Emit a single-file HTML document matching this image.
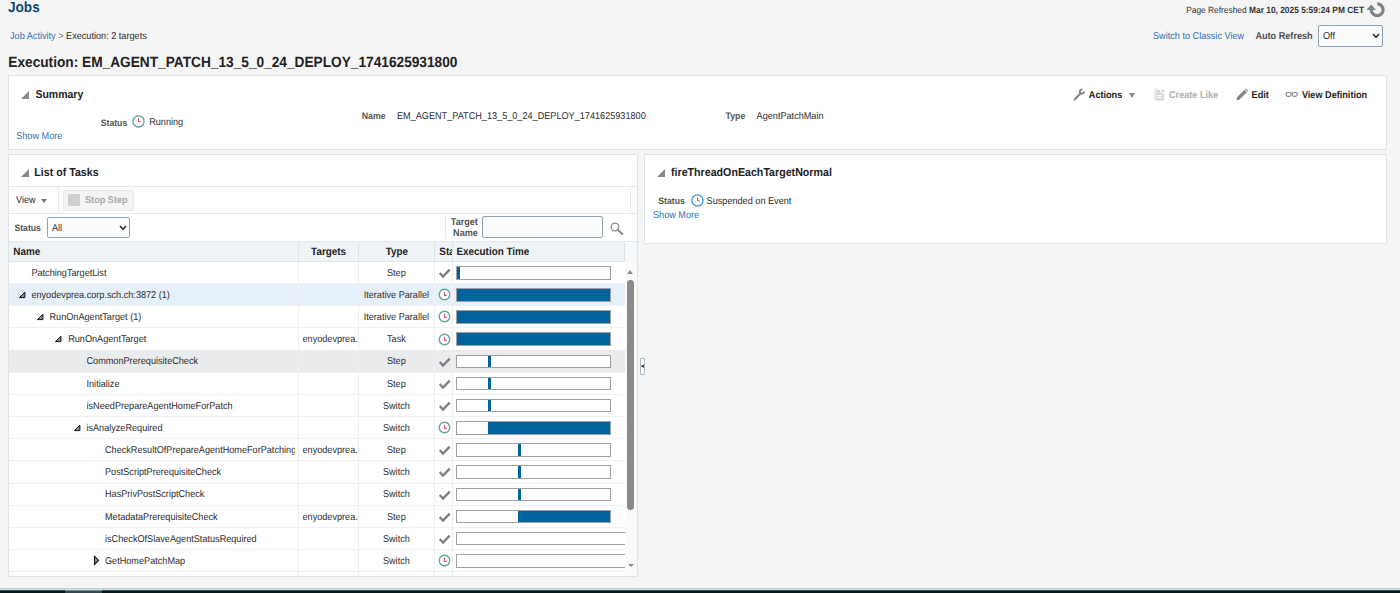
<!DOCTYPE html>
<html><head><meta charset="utf-8">
<style>
html,body{margin:0;padding:0}
body{width:1400px;height:593px;overflow:hidden;position:relative;background:#f5f5f5;font-family:"Liberation Sans",sans-serif;color:#2d2d2d;font-size:9.15px;text-rendering:geometricPrecision}
.a{position:absolute}
.t{position:absolute;white-space:nowrap;line-height:1;transform:scaleY(1.08);transform-origin:0 84.65%}
.b{font-weight:bold}
.lnk{color:#2f74b5}
.panel{position:absolute;background:#fff;border:1px solid #dde5ec;box-sizing:border-box}
.tri{position:absolute;width:0;height:0;border-style:solid;border-width:0 0 8px 8px;border-color:transparent transparent #8a8a8a transparent}
.stri{position:absolute;width:0;height:0;border-style:solid;border-width:0 0 6px 6px;border-color:transparent transparent #333 transparent}
</style></head><body>

<!-- header -->
<div class="t b" style="left:8px;top:1.4px;font-size:13.6px;color:#0e4770">Jobs</div>
<div class="t" style="left:10px;top:31.9px"><span class="lnk">Job Activity</span> <span style="color:#777">&gt;</span> Execution: 2 targets</div>
<div class="t b" style="left:8.3px;top:55.6px;font-size:13.7px;color:#222">Execution: EM_AGENT_PATCH_13_5_0_24_DEPLOY_1741625931800</div>

<div class="t" style="right:36px;top:6.3px;color:#333;font-size:8.4px">Page Refreshed <b>Mar 10, 2025 5:59:24 PM CET</b></div>
<svg class="a" style="left:1362px;top:0px" width="28" height="20" viewBox="0 0 28 20">
  <path d="M9.3 9.8 A5.9 5.9 0 1 0 15.2 3.9" fill="none" stroke="#808386" stroke-width="3.2"/>
  <path d="M4.4 9.9 L14 9.9 L9.3 4.6 Z" fill="#808386"/>
</svg>
<div class="t lnk" style="left:1153px;top:31.5px">Switch to Classic View</div>
<div class="t b" style="left:1255.4px;top:31.5px;color:#505050">Auto Refresh</div>
<div class="a" style="left:1318px;top:25px;width:65px;height:22px;box-sizing:border-box;border:1px solid #8fa2b2;border-radius:2px;background:#fbfcfe"></div>
<div class="t" style="left:1323px;top:31.5px">Off</div>
<svg class="a" style="left:1372px;top:33px" width="8" height="6" viewBox="0 0 8 6"><path d="M1 1 L4 4.3 L7 1" fill="none" stroke="#333" stroke-width="1.6"/></svg>

<!-- summary panel -->
<div class="panel" style="left:8px;top:75px;width:1379px;height:75px"></div>
<div class="tri" style="left:21px;top:91px"></div>
<div class="t b" style="left:35.4px;top:89.7px;font-size:10.5px;color:#222">Summary</div>
<div class="t b" style="left:100.7px;top:118.6px;font-size:8.7px;color:#555">Status</div>
<svg class="a" style="left:132.3px;top:114.9px" width="13" height="13" viewBox="0 0 13 13"><circle cx="6.5" cy="6.5" r="5.6" fill="none" stroke="#4b9b96" stroke-width="1.2"/><path d="M6.5 3.2 V6.8 H8.8" fill="none" stroke="#e04a5f" stroke-width="1"/></svg>
<div class="t" style="left:149.2px;top:118.4px">Running</div>
<div class="t lnk" style="left:16.2px;top:132.2px">Show More</div>
<div class="t b" style="left:361.7px;top:111.5px;font-size:8.8px;color:#555">Name</div>
<div class="t" style="left:397px;top:112.4px">EM_AGENT_PATCH_13_5_0_24_DEPLOY_1741625931800</div>
<div class="t b" style="left:725.5px;top:111.5px;font-size:8.8px;color:#555">Type</div>
<div class="t" style="left:756.6px;top:112.4px">AgentPatchMain</div>

<!-- actions -->
<svg class="a" style="left:1068px;top:84px" width="22" height="20" viewBox="0 0 22 20">
  <path d="M6.4 15.8 L12.4 9.6" stroke="#808489" stroke-width="2.1" stroke-linecap="round"/>
  <path d="M15.95 7.25 A2.05 2.05 0 1 1 14.35 5.6" fill="none" stroke="#808489" stroke-width="2"/>
  <circle cx="6.4" cy="15.8" r="0.5" fill="#fff"/>
</svg>
<div class="t b" style="left:1088.8px;top:90.8px;color:#222">Actions</div>
<div class="a" style="left:1129px;top:93px;width:0;height:0;border-left:3.3px solid transparent;border-right:3.3px solid transparent;border-top:5px solid #888"></div>
<svg class="a" style="left:1150px;top:84px" width="22" height="20" viewBox="0 0 22 20">
  <path d="M4 4.4 H9 V16 H4 Z" fill="#ededed"/>
  <rect x="6" y="6" width="7.9" height="10.7" fill="#d9d9d9"/>
  <circle cx="12.9" cy="7" r="2.8" fill="#fff"/>
  <circle cx="12.9" cy="7" r="1.7" fill="#d9d9d9"/>
  <rect x="7.1" y="11" width="4.9" height="1" fill="#fff"/><rect x="7.1" y="13" width="4.9" height="1" fill="#fff"/>
</svg>
<div class="t b" style="left:1169px;top:90.8px;color:#b0b0b0">Create Like</div>
<svg class="a" style="left:1232px;top:84px" width="22" height="20" viewBox="0 0 22 20">
  <path d="M4.3 16.4 L5.2 13.1 L12.4 5.9 L14.8 8.3 L7.6 15.5 Z" fill="#818589"/>
  <path d="M13 5.3 L13.8 4.5 L16.2 6.9 L15.4 7.7 Z" fill="#818589"/>
</svg>
<div class="t b" style="left:1251.6px;top:90.8px;color:#222">Edit</div>
<svg class="a" style="left:1282px;top:86px" width="20" height="16" viewBox="0 0 20 16">
  <path d="M3.6 7 H4.2 M9 7 H10.3 M15.1 7 H15.8" stroke="#878b90" stroke-width="1.1"/>
  <rect x="4.1" y="6.5" width="5" height="3.9" rx="1.9" fill="none" stroke="#878b90" stroke-width="1.15"/>
  <rect x="10.2" y="6.5" width="5" height="3.9" rx="1.9" fill="none" stroke="#878b90" stroke-width="1.15"/>
</svg>
<div class="t b" style="left:1301.9px;top:90.8px;color:#222">View Definition</div>

<!-- right panel -->
<div class="panel" style="left:644px;top:154px;width:743px;height:90px"></div>
<div class="tri" style="left:657.3px;top:169px"></div>
<div class="t b" style="left:671px;top:168.2px;font-size:10.66px;color:#222">fireThreadOnEachTargetNormal</div>
<div class="t b" style="left:658.3px;top:197px;font-size:8.7px;color:#555">Status</div>
<svg class="a" style="left:690.5px;top:194px" width="13" height="13" viewBox="0 0 13 13"><circle cx="6.5" cy="6.5" r="5.6" fill="none" stroke="#3d8ec9" stroke-width="1.2"/><path d="M6.5 3.2 V6.8 H8.8" fill="none" stroke="#3d8ec9" stroke-width="1"/></svg>
<div class="t" style="left:706.6px;top:196.7px">Suspended on Event</div>
<div class="t lnk" style="left:653px;top:210.8px">Show More</div>

<!-- list panel -->
<div class="panel" style="left:8px;top:154px;width:630px;height:423px"></div>
<!--LIST START-->
<div class="a" style="left:9px;top:154px;width:628px;height:422px;overflow:hidden">
<div class="tri" style="left:12px;top:14.800000000000011px"></div>
<div class="t b" style="left:25.299999999999997px;top:13.900000000000006px;font-size:10.66px;color:#222">List of Tasks</div>
<div class="a" style="left:0;top:32px;width:628px;height:1px;background:#e3e9ee"></div>
<div class="a" style="left:0;top:58.599999999999994px;width:628px;height:1px;background:#e3e9ee"></div>
<div class="t" style="left:7px;top:41.599999999999994px">View</div>
<div class="a" style="left:32px;top:44.5px;width:0;height:0;border-left:3px solid transparent;border-right:3px solid transparent;border-top:4px solid #777"></div>
<div class="a" style="left:49px;top:33px;width:1px;height:26px;background:#e3e9ee"></div>
<div class="a" style="left:621px;top:33px;width:1px;height:26px;background:#e3e9ee"></div>
<div class="a" style="left:54.3px;top:35.599999999999994px;width:71px;height:21px;box-sizing:border-box;border:1px solid #e6e9ec;border-radius:2px;background:#f3f4f5"></div>
<div class="a" style="left:59px;top:40px;width:12px;height:12px;background:#cfcfcf"></div>
<div class="t b" style="left:76px;top:41.599999999999994px;color:#aaa">Stop Step</div>
<div class="t b" style="left:5.4px;top:70.30000000000001px;font-size:8.7px;color:#555">Status</div>
<div class="a" style="left:38.3px;top:63.19999999999999px;width:82.3px;height:21px;box-sizing:border-box;border:1px solid #8fa2b2;border-radius:2px;background:#fbfcfe"></div>
<div class="t" style="left:43px;top:70.1px">All</div>
<svg class="a" style="left:110px;top:71px" width="8" height="6" viewBox="0 0 8 6"><path d="M1 1 L4 4.3 L7 1" fill="none" stroke="#333" stroke-width="1.6"/></svg>
<div class="a" style="left:436px;top:62px;width:1px;height:23px;background:#e3e9ee"></div>
<div class="t b" style="left:441.4px;top:64.6px;font-size:9.1px;color:#555;text-align:right;width:27.5px;line-height:9.8px">Target<br>Name</div>
<div class="a" style="left:473.4px;top:62.400000000000006px;width:120.5px;height:21.3px;box-sizing:border-box;border:1px solid #8fa2b2;border-radius:2px;background:#fbfcfe"></div>
<svg class="a" style="left:601px;top:67.5px" width="14" height="13" viewBox="0 0 14 13"><circle cx="5" cy="5" r="3.8" fill="none" stroke="#8a8a8a" stroke-width="1.3"/><path d="M7.8 7.8 L12.3 12" stroke="#8a8a8a" stroke-width="2" stroke-linecap="round"/></svg>
<div class="a" style="left:0;top:87px;width:616px;height:20.6px;background:#f0f3f6;border-top:1px solid #e0e6ec;border-bottom:1px solid #dfe5eb;box-sizing:border-box"></div>
<div class="a" style="left:616px;top:87px;width:12px;height:20.6px;background:#f6f8fa;border-top:1px solid #e0e6ec;box-sizing:border-box"></div>
<div class="a" style="left:288.8px;top:88px;width:1px;height:19px;background:#dde3e9"></div>
<div class="a" style="left:348.7px;top:88px;width:1px;height:19px;background:#dde3e9"></div>
<div class="a" style="left:425.1px;top:88px;width:1px;height:19px;background:#dde3e9"></div>
<div class="a" style="left:443.0px;top:88px;width:1px;height:19px;background:#dde3e9"></div>
<div class="a" style="left:615.4px;top:88px;width:1px;height:19px;background:#dde3e9"></div>
<div class="t b" style="left:4.300000000000001px;top:93.81965px;font-size:9.9px;color:#222">Name</div>
<div class="t b" style="left:302.1px;top:93.81965px;font-size:9.9px;color:#222">Targets</div>
<div class="t b" style="left:376.7px;top:93.81965px;font-size:9.9px;color:#222">Type</div>
<div class="t b" style="left:447.5px;top:93.81965px;font-size:9.9px;color:#222">Execution Time</div>
<div class="a" style="left:430.3px;top:87px;width:12.699999999999989px;height:20px;overflow:hidden"><div class="t b" style="left:0;top:6.819649999999996px;font-size:9.9px;color:#222">Status</div></div>
<div class="a" style="left:0;top:107.5px;width:616px;height:314.5px;overflow:hidden">
<div class="a" style="left:0;top:21.56px;width:616px;height:1px;background:#f0f1f2"></div>
<div class="a" style="left:22.4px;top:5.25px;width:263.6px;height:13px;overflow:hidden"><div class="t" style="left:0;top:2px">PatchingTargetList</div></div>
<div class="t" style="left:349.2px;top:7.25px;width:76.40000000000003px;text-align:center">Step</div>
<svg class="a" style="left:429px;top:6.40px" width="13" height="11" viewBox="0 0 13 11"><path d="M1.7 5.1 L5.0 8.6 L11.7 1.6" fill="none" stroke="#7b7f84" stroke-width="2.25"/></svg>
<div class="a" style="left:447px;top:4.50px;width:155px;height:13.5px;box-sizing:border-box;border:1px solid #a0a0a0;background:#fff"></div>
<div class="a" style="left:448px;top:5.50px;width:3px;height:11.5px;background:#00639e"></div>
<div class="a" style="left:0;top:22.16px;width:616px;height:22.16px;background:#e5f0fa"></div>
<div class="a" style="left:0;top:43.72px;width:616px;height:1px;background:#f0f1f2"></div>
<svg class="a" style="left:8.899999999999999px;top:29.36px" width="9" height="8" viewBox="0 0 9 8"><path d="M1.4 6.6 L6.9 1.2 V6.6 Z" fill="#8f8f8f" stroke="#111" stroke-width="1" stroke-linejoin="miter"/></svg>
<div class="a" style="left:22.4px;top:27.41px;width:263.6px;height:13px;overflow:hidden"><div class="t" style="left:0;top:2px">enyodevprea.corp.sch.ch:3872 (1)</div></div>
<div class="t" style="left:349.2px;top:29.41px;width:76.40000000000003px;text-align:center">Iterative Parallel</div>
<svg class="a" style="left:429.3px;top:26.76px" width="13" height="13" viewBox="0 0 13 13"><circle cx="6.5" cy="6.5" r="5.25" fill="#fff" stroke="#5aa39a" stroke-width="1.3"/><path d="M6.5 3.7 V7.3 H8.7" fill="none" stroke="#e0586e" stroke-width="1.2"/></svg>
<div class="a" style="left:447px;top:26.66px;width:155px;height:13.5px;box-sizing:border-box;border:1px solid #a0a0a0;background:#fff"></div>
<div class="a" style="left:448px;top:27.66px;width:153px;height:11.5px;background:#00639e"></div>
<div class="a" style="left:0;top:65.88px;width:616px;height:1px;background:#f0f1f2"></div>
<svg class="a" style="left:27px;top:51.52px" width="9" height="8" viewBox="0 0 9 8"><path d="M1.4 6.6 L6.9 1.2 V6.6 Z" fill="#8f8f8f" stroke="#111" stroke-width="1" stroke-linejoin="miter"/></svg>
<div class="a" style="left:40.5px;top:49.57px;width:245.5px;height:13px;overflow:hidden"><div class="t" style="left:0;top:2px">RunOnAgentTarget (1)</div></div>
<div class="t" style="left:349.2px;top:51.57px;width:76.40000000000003px;text-align:center">Iterative Parallel</div>
<svg class="a" style="left:429.3px;top:48.92px" width="13" height="13" viewBox="0 0 13 13"><circle cx="6.5" cy="6.5" r="5.25" fill="#fff" stroke="#5aa39a" stroke-width="1.3"/><path d="M6.5 3.7 V7.3 H8.7" fill="none" stroke="#e0586e" stroke-width="1.2"/></svg>
<div class="a" style="left:447px;top:48.82px;width:155px;height:13.5px;box-sizing:border-box;border:1px solid #a0a0a0;background:#fff"></div>
<div class="a" style="left:448px;top:49.82px;width:153px;height:11.5px;background:#00639e"></div>
<div class="a" style="left:0;top:88.04px;width:616px;height:1px;background:#f0f1f2"></div>
<svg class="a" style="left:45px;top:73.68px" width="9" height="8" viewBox="0 0 9 8"><path d="M1.4 6.6 L6.9 1.2 V6.6 Z" fill="#8f8f8f" stroke="#111" stroke-width="1" stroke-linejoin="miter"/></svg>
<div class="a" style="left:59.2px;top:71.73px;width:226.8px;height:13px;overflow:hidden"><div class="t" style="left:0;top:2px">RunOnAgentTarget</div></div>
<div class="a" style="left:293.5px;top:71.73px;width:55.5px;height:13px;overflow:hidden"><div class="t" style="left:0;top:2px">enyodevprea.corp.sch.ch</div></div>
<div class="t" style="left:349.2px;top:73.73px;width:76.40000000000003px;text-align:center">Task</div>
<svg class="a" style="left:429.3px;top:71.08px" width="13" height="13" viewBox="0 0 13 13"><circle cx="6.5" cy="6.5" r="5.25" fill="#fff" stroke="#5aa39a" stroke-width="1.3"/><path d="M6.5 3.7 V7.3 H8.7" fill="none" stroke="#e0586e" stroke-width="1.2"/></svg>
<div class="a" style="left:447px;top:70.98px;width:155px;height:13.5px;box-sizing:border-box;border:1px solid #a0a0a0;background:#fff"></div>
<div class="a" style="left:448px;top:71.98px;width:153px;height:11.5px;background:#00639e"></div>
<div class="a" style="left:0;top:88.64px;width:616px;height:22.16px;background:#eaebec"></div>
<div class="a" style="left:0;top:110.20px;width:616px;height:1px;background:#f0f1f2"></div>
<div class="a" style="left:77.5px;top:93.89px;width:208.5px;height:13px;overflow:hidden"><div class="t" style="left:0;top:2px">CommonPrerequisiteCheck</div></div>
<div class="t" style="left:349.2px;top:95.89px;width:76.40000000000003px;text-align:center">Step</div>
<svg class="a" style="left:429px;top:95.04px" width="13" height="11" viewBox="0 0 13 11"><path d="M1.7 5.1 L5.0 8.6 L11.7 1.6" fill="none" stroke="#7b7f84" stroke-width="2.25"/></svg>
<div class="a" style="left:447px;top:93.14px;width:155px;height:13.5px;box-sizing:border-box;border:1px solid #a0a0a0;background:#fff"></div>
<div class="a" style="left:478.6px;top:94.14px;width:3.3px;height:11.5px;background:#00639e"></div>
<div class="a" style="left:0;top:132.36px;width:616px;height:1px;background:#f0f1f2"></div>
<div class="a" style="left:77.5px;top:116.05px;width:208.5px;height:13px;overflow:hidden"><div class="t" style="left:0;top:2px">Initialize</div></div>
<div class="t" style="left:349.2px;top:118.05px;width:76.40000000000003px;text-align:center">Step</div>
<svg class="a" style="left:429px;top:117.20px" width="13" height="11" viewBox="0 0 13 11"><path d="M1.7 5.1 L5.0 8.6 L11.7 1.6" fill="none" stroke="#7b7f84" stroke-width="2.25"/></svg>
<div class="a" style="left:447px;top:115.30px;width:155px;height:13.5px;box-sizing:border-box;border:1px solid #a0a0a0;background:#fff"></div>
<div class="a" style="left:478.6px;top:116.30px;width:3.3px;height:11.5px;background:#00639e"></div>
<div class="a" style="left:0;top:154.52px;width:616px;height:1px;background:#f0f1f2"></div>
<div class="a" style="left:77.5px;top:138.21px;width:208.5px;height:13px;overflow:hidden"><div class="t" style="left:0;top:2px">isNeedPrepareAgentHomeForPatch</div></div>
<div class="t" style="left:349.2px;top:140.21px;width:76.40000000000003px;text-align:center">Switch</div>
<svg class="a" style="left:429px;top:139.36px" width="13" height="11" viewBox="0 0 13 11"><path d="M1.7 5.1 L5.0 8.6 L11.7 1.6" fill="none" stroke="#7b7f84" stroke-width="2.25"/></svg>
<div class="a" style="left:447px;top:137.46px;width:155px;height:13.5px;box-sizing:border-box;border:1px solid #a0a0a0;background:#fff"></div>
<div class="a" style="left:478.6px;top:138.46px;width:3.3px;height:11.5px;background:#00639e"></div>
<div class="a" style="left:0;top:176.68px;width:616px;height:1px;background:#f0f1f2"></div>
<svg class="a" style="left:64px;top:162.32px" width="9" height="8" viewBox="0 0 9 8"><path d="M1.4 6.6 L6.9 1.2 V6.6 Z" fill="#8f8f8f" stroke="#111" stroke-width="1" stroke-linejoin="miter"/></svg>
<div class="a" style="left:77.4px;top:160.37px;width:208.6px;height:13px;overflow:hidden"><div class="t" style="left:0;top:2px">isAnalyzeRequired</div></div>
<div class="t" style="left:349.2px;top:162.37px;width:76.40000000000003px;text-align:center">Switch</div>
<svg class="a" style="left:429.3px;top:159.72px" width="13" height="13" viewBox="0 0 13 13"><circle cx="6.5" cy="6.5" r="5.25" fill="#fff" stroke="#5aa39a" stroke-width="1.3"/><path d="M6.5 3.7 V7.3 H8.7" fill="none" stroke="#e0586e" stroke-width="1.2"/></svg>
<div class="a" style="left:447px;top:159.62px;width:155px;height:13.5px;box-sizing:border-box;border:1px solid #a0a0a0;background:#fff"></div>
<div class="a" style="left:478.5px;top:160.62px;width:122.5px;height:11.5px;background:#00639e"></div>
<div class="a" style="left:0;top:198.84px;width:616px;height:1px;background:#f0f1f2"></div>
<div class="a" style="left:96px;top:182.53px;width:190px;height:13px;overflow:hidden"><div class="t" style="left:0;top:2px">CheckResultOfPrepareAgentHomeForPatching</div></div>
<div class="a" style="left:293.5px;top:182.53px;width:55.5px;height:13px;overflow:hidden"><div class="t" style="left:0;top:2px">enyodevprea.corp.sch.ch</div></div>
<div class="t" style="left:349.2px;top:184.53px;width:76.40000000000003px;text-align:center">Step</div>
<svg class="a" style="left:429px;top:183.68px" width="13" height="11" viewBox="0 0 13 11"><path d="M1.7 5.1 L5.0 8.6 L11.7 1.6" fill="none" stroke="#7b7f84" stroke-width="2.25"/></svg>
<div class="a" style="left:447px;top:181.78px;width:155px;height:13.5px;box-sizing:border-box;border:1px solid #a0a0a0;background:#fff"></div>
<div class="a" style="left:509.4px;top:182.78px;width:2.5px;height:11.5px;background:#00639e"></div>
<div class="a" style="left:0;top:221.00px;width:616px;height:1px;background:#f0f1f2"></div>
<div class="a" style="left:96px;top:204.69px;width:190px;height:13px;overflow:hidden"><div class="t" style="left:0;top:2px">PostScriptPrerequisiteCheck</div></div>
<div class="t" style="left:349.2px;top:206.69px;width:76.40000000000003px;text-align:center">Switch</div>
<svg class="a" style="left:429px;top:205.84px" width="13" height="11" viewBox="0 0 13 11"><path d="M1.7 5.1 L5.0 8.6 L11.7 1.6" fill="none" stroke="#7b7f84" stroke-width="2.25"/></svg>
<div class="a" style="left:447px;top:203.94px;width:155px;height:13.5px;box-sizing:border-box;border:1px solid #a0a0a0;background:#fff"></div>
<div class="a" style="left:509.4px;top:204.94px;width:2.5px;height:11.5px;background:#00639e"></div>
<div class="a" style="left:0;top:243.16px;width:616px;height:1px;background:#f0f1f2"></div>
<div class="a" style="left:96px;top:226.85px;width:190px;height:13px;overflow:hidden"><div class="t" style="left:0;top:2px">HasPrivPostScriptCheck</div></div>
<div class="t" style="left:349.2px;top:228.85px;width:76.40000000000003px;text-align:center">Switch</div>
<svg class="a" style="left:429px;top:228.00px" width="13" height="11" viewBox="0 0 13 11"><path d="M1.7 5.1 L5.0 8.6 L11.7 1.6" fill="none" stroke="#7b7f84" stroke-width="2.25"/></svg>
<div class="a" style="left:447px;top:226.10px;width:155px;height:13.5px;box-sizing:border-box;border:1px solid #a0a0a0;background:#fff"></div>
<div class="a" style="left:509.4px;top:227.10px;width:2.5px;height:11.5px;background:#00639e"></div>
<div class="a" style="left:0;top:265.32px;width:616px;height:1px;background:#f0f1f2"></div>
<div class="a" style="left:96px;top:249.01px;width:190px;height:13px;overflow:hidden"><div class="t" style="left:0;top:2px">MetadataPrerequisiteCheck</div></div>
<div class="a" style="left:293.5px;top:249.01px;width:55.5px;height:13px;overflow:hidden"><div class="t" style="left:0;top:2px">enyodevprea.corp.sch.ch</div></div>
<div class="t" style="left:349.2px;top:251.01px;width:76.40000000000003px;text-align:center">Step</div>
<svg class="a" style="left:429px;top:250.16px" width="13" height="11" viewBox="0 0 13 11"><path d="M1.7 5.1 L5.0 8.6 L11.7 1.6" fill="none" stroke="#7b7f84" stroke-width="2.25"/></svg>
<div class="a" style="left:447px;top:248.26px;width:155px;height:13.5px;box-sizing:border-box;border:1px solid #a0a0a0;background:#fff"></div>
<div class="a" style="left:509.4px;top:249.26px;width:91.60000000000002px;height:11.5px;background:#00639e"></div>
<div class="a" style="left:0;top:287.48px;width:616px;height:1px;background:#f0f1f2"></div>
<div class="a" style="left:96px;top:271.17px;width:190px;height:13px;overflow:hidden"><div class="t" style="left:0;top:2px">isCheckOfSlaveAgentStatusRequired</div></div>
<div class="t" style="left:349.2px;top:273.17px;width:76.40000000000003px;text-align:center">Switch</div>
<svg class="a" style="left:429px;top:272.32px" width="13" height="11" viewBox="0 0 13 11"><path d="M1.7 5.1 L5.0 8.6 L11.7 1.6" fill="none" stroke="#7b7f84" stroke-width="2.25"/></svg>
<div class="a" style="left:447px;top:270.42px;width:174px;height:13.5px;box-sizing:border-box;border:1px solid #a0a0a0;background:#fff"></div>
<div class="a" style="left:0;top:309.64px;width:616px;height:1px;background:#f0f1f2"></div>
<svg class="a" style="left:83.5px;top:293.28px" width="8" height="11" viewBox="0 0 8 11"><path d="M1.5 1.3 L5.6 5.4 L1.5 9.5 Z" fill="#8f8f8f" stroke="#111" stroke-width="1.1" stroke-linejoin="miter"/></svg>
<div class="a" style="left:96px;top:293.33px;width:190px;height:13px;overflow:hidden"><div class="t" style="left:0;top:2px">GetHomePatchMap</div></div>
<div class="t" style="left:349.2px;top:295.33px;width:76.40000000000003px;text-align:center">Switch</div>
<svg class="a" style="left:429.3px;top:292.68px" width="13" height="13" viewBox="0 0 13 13"><circle cx="6.5" cy="6.5" r="5.25" fill="#fff" stroke="#5aa39a" stroke-width="1.3"/><path d="M6.5 3.7 V7.3 H8.7" fill="none" stroke="#e0586e" stroke-width="1.2"/></svg>
<div class="a" style="left:447px;top:292.58px;width:174px;height:13.5px;box-sizing:border-box;border:1px solid #a0a0a0;background:#fff"></div>
<div class="a" style="left:0;top:331.80px;width:616px;height:1px;background:#f0f1f2"></div>
<div class="a" style="left:288.8px;top:0;width:1px;height:400px;background:#efefef"></div>
<div class="a" style="left:348.7px;top:0;width:1px;height:400px;background:#efefef"></div>
<div class="a" style="left:425.1px;top:0;width:1px;height:400px;background:#efefef"></div>
<div class="a" style="left:443.0px;top:0;width:1px;height:400px;background:#efefef"></div>
</div>
<div class="a" style="left:615.9px;top:107.60000000000002px;width:12.100000000000023px;height:314.4px;background:#fafafa"></div>
<div class="a" style="left:618.2px;top:115.80000000000001px;width:0;height:0;border-left:3.5px solid transparent;border-right:3.5px solid transparent;border-bottom:4px solid #8a8a8a"></div>
<div class="a" style="left:618.4px;top:125.69999999999999px;width:6.8px;height:230.8px;background:#8a8a8a;border-radius:3.4px"></div>
<div class="a" style="left:618.8px;top:410px;width:0;height:0;border-left:3.3px solid transparent;border-right:3.3px solid transparent;border-top:3.5px solid #8a8a8a"></div>
</div>
<!--LIST END-->

<!-- splitter handle -->
<div class="a" style="left:639.5px;top:357.6px;width:5.4px;height:17.2px;box-sizing:border-box;border:1px solid #a9b9c7;border-radius:1px;background:#fff"></div>
<svg class="a" style="left:640px;top:363px" width="5" height="6" viewBox="0 0 5 6"><path d="M0.8 3.2 L3.8 1.6 V4.8 Z" fill="#222"/></svg>
<!-- bottom bar -->
<div class="a" style="left:0;top:588px;width:1400px;height:1px;background:#c3d1ce"></div>
<div class="a" style="left:0;top:589px;width:1400px;height:1px;background:#c8e0e3"></div>
<div class="a" style="left:0;top:590px;width:1400px;height:1px;background:#3d5157"></div>
<div class="a" style="left:0;top:591px;width:1400px;height:2px;background:#08161c"></div>
<div class="a" style="left:65px;top:590px;width:37px;height:1px;background:#7d9196"></div>
<div class="a" style="left:65px;top:591px;width:37px;height:2px;background:#34474d"></div>
</body></html>
